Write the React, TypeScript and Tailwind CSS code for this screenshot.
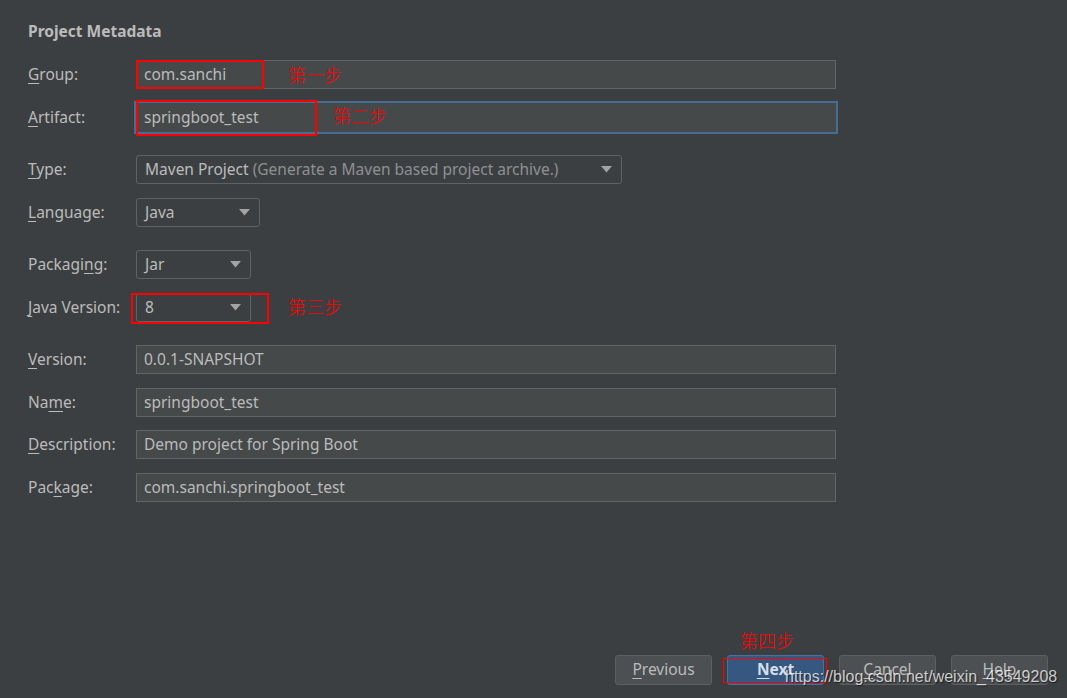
import React from "react";

const font = "font-['Segoe_UI','Noto_Sans','Open_Sans',sans-serif]";

function Label({ text, u, width = "w-[108px]" }: { text: string; u: number; width?: string }) {
  return (
    <div className={`${width} shrink-0 text-[15.5px] text-[#bbbbbb]`}>
      {text.slice(0, u)}
      <span className="underline underline-offset-[3px]">{text[u]}</span>
      {text.slice(u + 1)}
    </div>
  );
}

function Caret() {
  return (
    <svg width="11" height="7" viewBox="0 0 11 7" className="shrink-0">
      <path d="M0 0 L11 0 L5.5 6.5 Z" fill="#a3a3a3" />
    </svg>
  );
}

function Field({ value, focused = false }: { value: string; focused?: boolean }) {
  return (
    <div
      className={`w-[700px] h-[29px] flex items-center px-[7px] bg-[#45494a] border text-[15.5px] text-[#bbbbbb] ${
        focused ? "border-[#45494a] shadow-[0_0_0_2px_#466d94]" : "border-[#646464]"
      }`}
    >
      {value}
    </div>
  );
}

function Combo({ children, width }: { children: React.ReactNode; width: string }) {
  return (
    <div
      className={`${width} h-[29px] flex items-center justify-between pl-[8px] pr-[9px] rounded-[3px] border border-[#5e6263] text-[15.5px] text-[#bbbbbb]`}
    >
      <div className="whitespace-nowrap">{children}</div>
      <Caret />
    </div>
  );
}

function Note({ text, className }: { text: string; className: string }) {
  return (
    <div
      className={`absolute text-[18px] leading-[20px] text-[#ff0000] font-['Noto_Sans_CJK_SC',sans-serif] font-light ${className}`}
    >
      {text}
    </div>
  );
}

function Button({ text, u, primary = false }: { text: string; u: number; primary?: boolean }) {
  return (
    <div
      className={`w-[97px] h-[30px] flex items-center justify-center rounded-[3px] border text-[15.5px] ${
        primary
          ? "bg-[#365880] border-[#4c709a] text-[#d5dde8] font-bold"
          : "bg-[#4c5052] border-[#5e6060] text-[#bbbbbb]"
      }`}
    >
      <span>
        {text.slice(0, u)}
        <span className="underline underline-offset-[3px]">{text[u]}</span>
        {text.slice(u + 1)}
      </span>
    </div>
  );
}

export default function App() {
  return (
    <div className={`relative w-[1067px] h-[698px] bg-[#3c3f41] flex flex-col ${font} overflow-hidden`}>
      <div className="pl-[28px] pt-[21px] flex flex-col">
        <div className="h-[20px] leading-[20px] text-[15.5px] font-bold text-[#bbbbbb]">Project Metadata</div>

        <div className="relative mt-[19px] flex items-center">
          <Label text="Group:" u={0} />
          <Field value="com.sanchi" />
          <div className="absolute left-[108px] top-0 w-[128px] h-[29px] border-2 border-[#ff0000]" />
          <Note text="第一步" className="left-[260px] top-[4px]" />
        </div>

        <div className="relative mt-[14px] flex items-center">
          <Label text="Artifact:" u={0} />
          <Field value="springboot_test" focused />
          <div className="absolute left-[108px] top-[-3px] w-[181px] h-[36px] border-2 border-[#ff0000]" />
          <Note text="第二步" className="left-[305px] top-[2px]" />
        </div>

        <div className="mt-[23px] flex items-center">
          <Label text="Type:" u={0} />
          <Combo width="w-[486px]">
            Maven Project <span className="text-[#8e9092]">(Generate a Maven based project archive.)</span>
          </Combo>
        </div>

        <div className="mt-[14px] flex items-center">
          <Label text="Language:" u={0} />
          <Combo width="w-[124px]">Java</Combo>
        </div>

        <div className="mt-[23px] flex items-center">
          <Label text="Packaging:" u={7} />
          <Combo width="w-[115px]">Jar</Combo>
        </div>

        <div className="relative mt-[14px] flex items-center">
          <Label text="Java Version:" u={0} />
          <Combo width="w-[115px]">8</Combo>
          <div className="absolute left-[103px] top-0 w-[138px] h-[31px] border-2 border-[#ff0000]" />
          <Note text="第三步" className="left-[260px] top-[3px]" />
        </div>

        <div className="mt-[23px] flex items-center">
          <Label text="Version:" u={0} />
          <Field value="0.0.1-SNAPSHOT" />
        </div>

        <div className="mt-[14px] flex items-center">
          <Label text="Name:" u={2} />
          <Field value="springboot_test" />
        </div>

        <div className="mt-[13px] flex items-center">
          <Label text="Description:" u={0} />
          <Field value="Demo project for Spring Boot" />
        </div>

        <div className="mt-[14px] flex items-center">
          <Label text="Package:" u={3} />
          <Field value="com.sanchi.springboot_test" />
        </div>
      </div>

      <div className="mt-auto pb-[13px] pr-[19px] flex justify-end gap-[15px]">
        <Button text="Previous" u={0} />
        <div className="relative">
          <Button text="Next" u={0} primary />
          <div className="absolute left-[-4px] top-[3px] w-[104px] h-[25px] border border-[#ff0000]" />
          <Note text="第四步" className="left-[13px] top-[-25px]" />
        </div>
        <Button text="Cancel" u={0} />
        <Button text="Help" u={0} />
      </div>

      <div className="absolute left-[785px] top-[667px] text-[16px] leading-[20px] text-[rgba(255,255,255,0.75)] font-['Liberation_Sans',Arial,sans-serif] [text-shadow:1px_1px_1px_rgba(0,0,0,0.6)] whitespace-nowrap">
        https://blog.csdn.net/weixin_43549208
      </div>
    </div>
  );
}
